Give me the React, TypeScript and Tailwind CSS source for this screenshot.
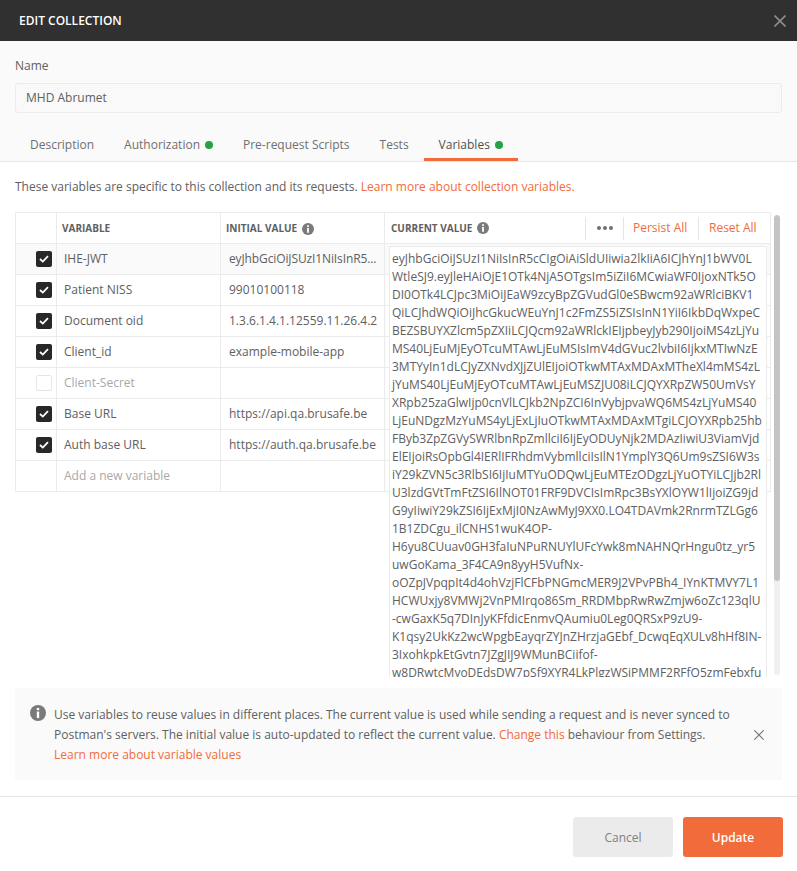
import React from 'react';

const tabs = [
  { label: 'Description', dot: false, active: false },
  { label: 'Authorization', dot: true, active: false },
  { label: 'Pre-request Scripts', dot: false, active: false },
  { label: 'Tests', dot: false, active: false },
  { label: 'Variables', dot: true, active: true },
];

const rows = [
  { name: 'IHE-JWT', initial: 'eyJhbGciOiJSUzI1NiIsInR5...', checked: true, tight: true },
  { name: 'Patient NISS', initial: '99010100118', checked: true, tight: false },
  { name: 'Document oid', initial: '1.3.6.1.4.1.12559.11.26.4.2', checked: true, tight: false },
  { name: 'Client_id', initial: 'example-mobile-app', checked: true, tight: false },
  { name: 'Client-Secret', initial: '', checked: false, tight: false },
  { name: 'Base URL', initial: 'https://api.qa.brusafe.be', checked: true, tight: false },
  { name: 'Auth base URL', initial: 'https://auth.qa.brusafe.be', checked: true, tight: false },
];

const tokenLines = [
  'eyJhbGciOiJSUzI1NiIsInR5cCIgOiAiSldUIiwia2lkIiA6ICJhYnJ1bWV0L',
  'WtleSJ9.eyJleHAiOjE1OTk4NjA5OTgsIm5iZiI6MCwiaWF0IjoxNTk5O',
  'DI0OTk4LCJpc3MiOiJEaW9zcyBpZGVudGl0eSBwcm92aWRlciBKV1',
  'QiLCJhdWQiOiJhcGkucWEuYnJ1c2FmZS5iZSIsInN1YiI6IkbDqWxpeC',
  'BEZSBUYXZlcm5pZXIiLCJQcm92aWRlckIEIjpbeyJyb290IjoiMS4zLjYu',
  'MS40LjEuMjEyOTcuMTAwLjEuMSIsImV4dGVuc2lvbiI6IjkxMTIwNzE',
  '3MTYyIn1dLCJyZXNvdXJjZUlEIjoiOTkwMTAxMDAxMTheXl4mMS4zL',
  'jYuMS40LjEuMjEyOTcuMTAwLjEuMSZJU08iLCJQYXRpZW50UmVsY',
  'XRpb25zaGlwIjp0cnVlLCJkb2NpZCI6InVybjpvaWQ6MS4zLjYuMS40',
  'LjEuNDgzMzYuMS4yLjExLjIuOTkwMTAxMDAxMTgiLCJOYXRpb25hb',
  'FByb3ZpZGVySWRlbnRpZmllciI6IjEyODUyNjk2MDAzIiwiU3ViamVjd',
  'ElEIjoiRsOpbGl4IERlIFRhdmVybmllciIsIlN1YmplY3Q6Um9sZSI6W3s',
  'iY29kZVN5c3RlbSI6IjIuMTYuODQwLjEuMTEzODgzLjYuOTYiLCJjb2Rl',
  'U3lzdGVtTmFtZSI6IlNOT01FRF9DVCIsImRpc3BsYXlOYW1lIjoiZG9jd',
  'G9yIiwiY29kZSI6IjExMjI0NzAwMyJ9XX0.LO4TDAVmk2RnrmTZLGg6',
  '1B1ZDCgu_ilCNHS1wuK4OP-',
  'H6yu8CUuav0GH3faIuNPuRNUYlUFcYwk8mNAHNQrHngu0tz_yr5',
  'uwGoKama_3F4CA9n8yyH5VufNx-',
  'oOZpJVpqpIt4d4ohVzjFlCFbPNGmcMER9J2VPvPBh4_IYnKTMVY7L1',
  'HCWUxjy8VMWj2VnPMIrqo86Sm_RRDMbpRwRwZmjw6oZc123qlU',
  '-cwGaxK5q7DInJyKFfdicEnmvQAumiu0Leg0QRSxP9zU9-',
  'K1qsy2UkKz2wcWpgbEayqrZYJnZHrzjaGEbf_DcwqEqXULv8hHf8IN-',
  '3IxohkpkEtGvtn7JZgJIJ9WMunBCiifof-',
  'w8DRwtcMyoDEdsDW7pSf9XYR4LkPlgzWSjPMMF2RFfQ5zmFebxfu',
];

const InfoIcon = ({ size = 12 }: { size?: number }) => (
  <svg width={size} height={size} viewBox="0 0 12 12" className="shrink-0">
    <circle cx="6" cy="6" r="6" fill="#7a7a7a" />
    <rect x="5.1" y="2.2" width="1.8" height="1.7" fill="#fff" />
    <rect x="5.1" y="4.9" width="1.8" height="4.9" fill="#fff" />
  </svg>
);

const CloseIcon = ({ size, color, sw }: { size: number; color: string; sw: number }) => (
  <svg width={size} height={size} viewBox="0 0 12 12" fill="none" stroke={color} strokeWidth={sw}>
    <path d="M0.5 0.5L11.5 11.5M11.5 0.5L0.5 11.5" />
  </svg>
);

const Checkbox = ({ checked }: { checked: boolean }) =>
  checked ? (
    <div className="w-4 h-4 rounded-[2px] bg-[#282828] flex items-center justify-center">
      <svg width="10" height="8" viewBox="0 0 10 8" fill="none" stroke="#fff" strokeWidth="1.8">
        <path d="M1 4L3.8 6.6L9 1.2" />
      </svg>
    </div>
  ) : (
    <div className="w-4 h-4 rounded-[2px] bg-white border border-[#e6e6e6]" />
  );

export default function App() {
  return (
    <div className="w-[797px] h-[871px] bg-white overflow-hidden font-['Open_Sans',sans-serif] text-xs text-[#505050]">
      {/* Header */}
      <div className="h-[41px] bg-[#303030] flex items-center justify-between pl-[19px] pr-[11px]">
        <span className="text-white text-xs font-semibold">EDIT COLLECTION</span>
        <CloseIcon size={12} color="#8c8c8c" sw={1.6} />
      </div>

      {/* Name and tabs */}
      <div className="h-[121px] bg-[#fafafa] border-b border-[#e6e6e6] flex flex-col">
        <div className="pt-[17px] pl-[15px] leading-[16px] text-[#606060]">Name</div>
        <div className="mt-[9px] mx-[15px] h-[30px] bg-[#f9f9f9] border border-[#ebebeb] rounded-[3px] pl-[10px] flex items-center text-[#606060]">
          MHD Abrumet
        </div>
        <div className="flex mt-[auto] pl-[15px] h-[35px]">
          {tabs.map((t) => (
            <div
              key={t.label}
              className={`flex items-center gap-[5px] px-[15px] h-[35px] border-b-[3px] pt-[5px] ${
                t.active ? 'border-[#f26b3a] text-[#505050]' : 'border-transparent text-[#707070]'
              }`}
            >
              {t.label}
              {t.dot && <span className="w-2 h-2 rounded-full bg-[#26a244]" />}
            </div>
          ))}
        </div>
      </div>

      {/* Intro */}
      <div className="pl-[15px] pt-[17px] leading-[16px] text-[#606060]">
        These variables are specific to this collection and its requests.{' '}
        <span className="text-[#f26b3a]">Learn more about collection variables.</span>
      </div>

      {/* Table */}
      <div className="mx-[15px] mt-[17px] h-[465px] flex gap-[3px] overflow-hidden">
        <div className="relative w-[756px] shrink-0 h-full">
          <div className="border-t border-l border-r border-[#ebebeb]">
            <div className="flex h-[31px] border-b border-[#ebebeb]">
              <div className="w-[41px] border-r border-[#ebebeb]" />
              <div className="w-[164px] border-r border-[#ebebeb] pl-[5px] pt-[1px] flex items-center text-[10px] font-bold text-[#606060]">
                VARIABLE
              </div>
              <div className="w-[164px] border-r border-[#ebebeb] pl-[5px] pt-[1px] flex items-center gap-[5px] text-[10px] font-bold text-[#606060]">
                INITIAL VALUE <InfoIcon />
              </div>
              <div className="flex-1 flex items-center pl-[6px] text-[10px] font-bold text-[#606060]">
                <span className="flex items-center gap-[5px] pt-[1px]">
                  CURRENT VALUE <InfoIcon />
                </span>
                <div className="ml-auto flex items-center h-full text-xs font-normal">
                  <div className="h-[23px] border-l border-[#e6e6e6] w-[38px] flex items-center justify-center gap-[2px]">
                    <span className="w-1 h-1 rounded-full bg-[#707070]" />
                    <span className="w-1 h-1 rounded-full bg-[#707070]" />
                    <span className="w-1 h-1 rounded-full bg-[#707070]" />
                  </div>
                  <div className="h-[23px] border-l border-[#e6e6e6] w-[75px] flex items-center pl-[9px] text-[#f26b3a]">
                    Persist All
                  </div>
                  <div className="h-[23px] border-l border-[#e6e6e6] w-[72px] flex items-center pl-[10px] text-[#f26b3a]">
                    Reset All
                  </div>
                </div>
              </div>
            </div>
            {rows.map((r, i) => (
              <div key={r.name} className={`flex h-[31px] border-b border-[#ebebeb] ${i === 0 ? 'bg-[#fafafa]' : ''}`}>
                <div className="w-[41px] border-r border-[#ebebeb] flex items-center justify-end pr-[4px]">
                  <Checkbox checked={r.checked} />
                </div>
                <div className={`w-[164px] border-r border-[#ebebeb] pl-[7px] flex items-center ${r.checked ? 'text-[#606060]' : 'text-[#a8a8a8]'}`}>
                  {r.name}
                </div>
                <div className={`w-[164px] border-r border-[#ebebeb] pl-[8px] flex items-center whitespace-nowrap overflow-hidden text-[#606060] ${r.tight ? 'tracking-[-0.12px]' : ''}`}>
                  {r.initial}
                </div>
              </div>
            ))}
            <div className="flex h-[31px] border-b border-[#ebebeb]">
              <div className="w-[41px] border-r border-[#ebebeb]" />
              <div className="w-[164px] border-r border-[#ebebeb] pl-[7px] flex items-center text-[#a8a8a8]">
                Add a new variable
              </div>
              <div className="w-[164px] border-r border-[#ebebeb]" />
            </div>
          </div>

          {/* Expanded current value editor */}
          <div className="absolute left-[374px] top-[34px] w-[378px] h-[431px] overflow-hidden bg-white border-t border-l border-r border-[#ebebeb] pl-[2px] pt-[3px] leading-[18px] text-[#606060] whitespace-nowrap">
            {tokenLines.map((line) => (
              <div key={line}>{line}</div>
            ))}
          </div>
        </div>

        {/* Scrollbar */}
        <div className="w-[6px] mt-[3px] mr-0 h-[460px] rounded-[3px] bg-[#f0f0f0] overflow-hidden">
          <div className="h-[366px] rounded-[3px] bg-[#c4c4c4]" />
        </div>
      </div>

      {/* Info banner */}
      <div className="mx-[15px] mt-[11px] h-[92px] bg-[#fafafa] flex items-start pl-[15px] pt-[17px] text-[#606060]">
        <InfoIcon size={16} />
        <div className="ml-[8px] w-[690px] leading-[20px]">
          Use variables to reuse values in different places. The current value is used while sending a request and is never synced to Postman's servers. The initial value is auto-updated to reflect the current value.{' '}
          <span className="text-[#f26b3a]">Change this</span> behaviour from Settings.
          <div className="text-[#f26b3a]">Learn more about variable values</div>
        </div>
        <div className="ml-[10px] pt-[25px]">
          <CloseIcon size={10} color="#707070" sw={1.3} />
        </div>
      </div>

      {/* Footer */}
      <div className="mt-[16px] border-t border-[#e6e6e6] pt-[20px] pr-[14px] flex justify-end gap-[10px]">
        <button className="w-[100px] h-[40px] rounded-[3px] bg-[#ebebeb] text-[#808080] text-xs pt-[1px]">Cancel</button>
        <button className="w-[100px] h-[40px] rounded-[3px] bg-[#f26b3a] text-white text-xs font-semibold pt-[1px]">Update</button>
      </div>
    </div>
  );
}
